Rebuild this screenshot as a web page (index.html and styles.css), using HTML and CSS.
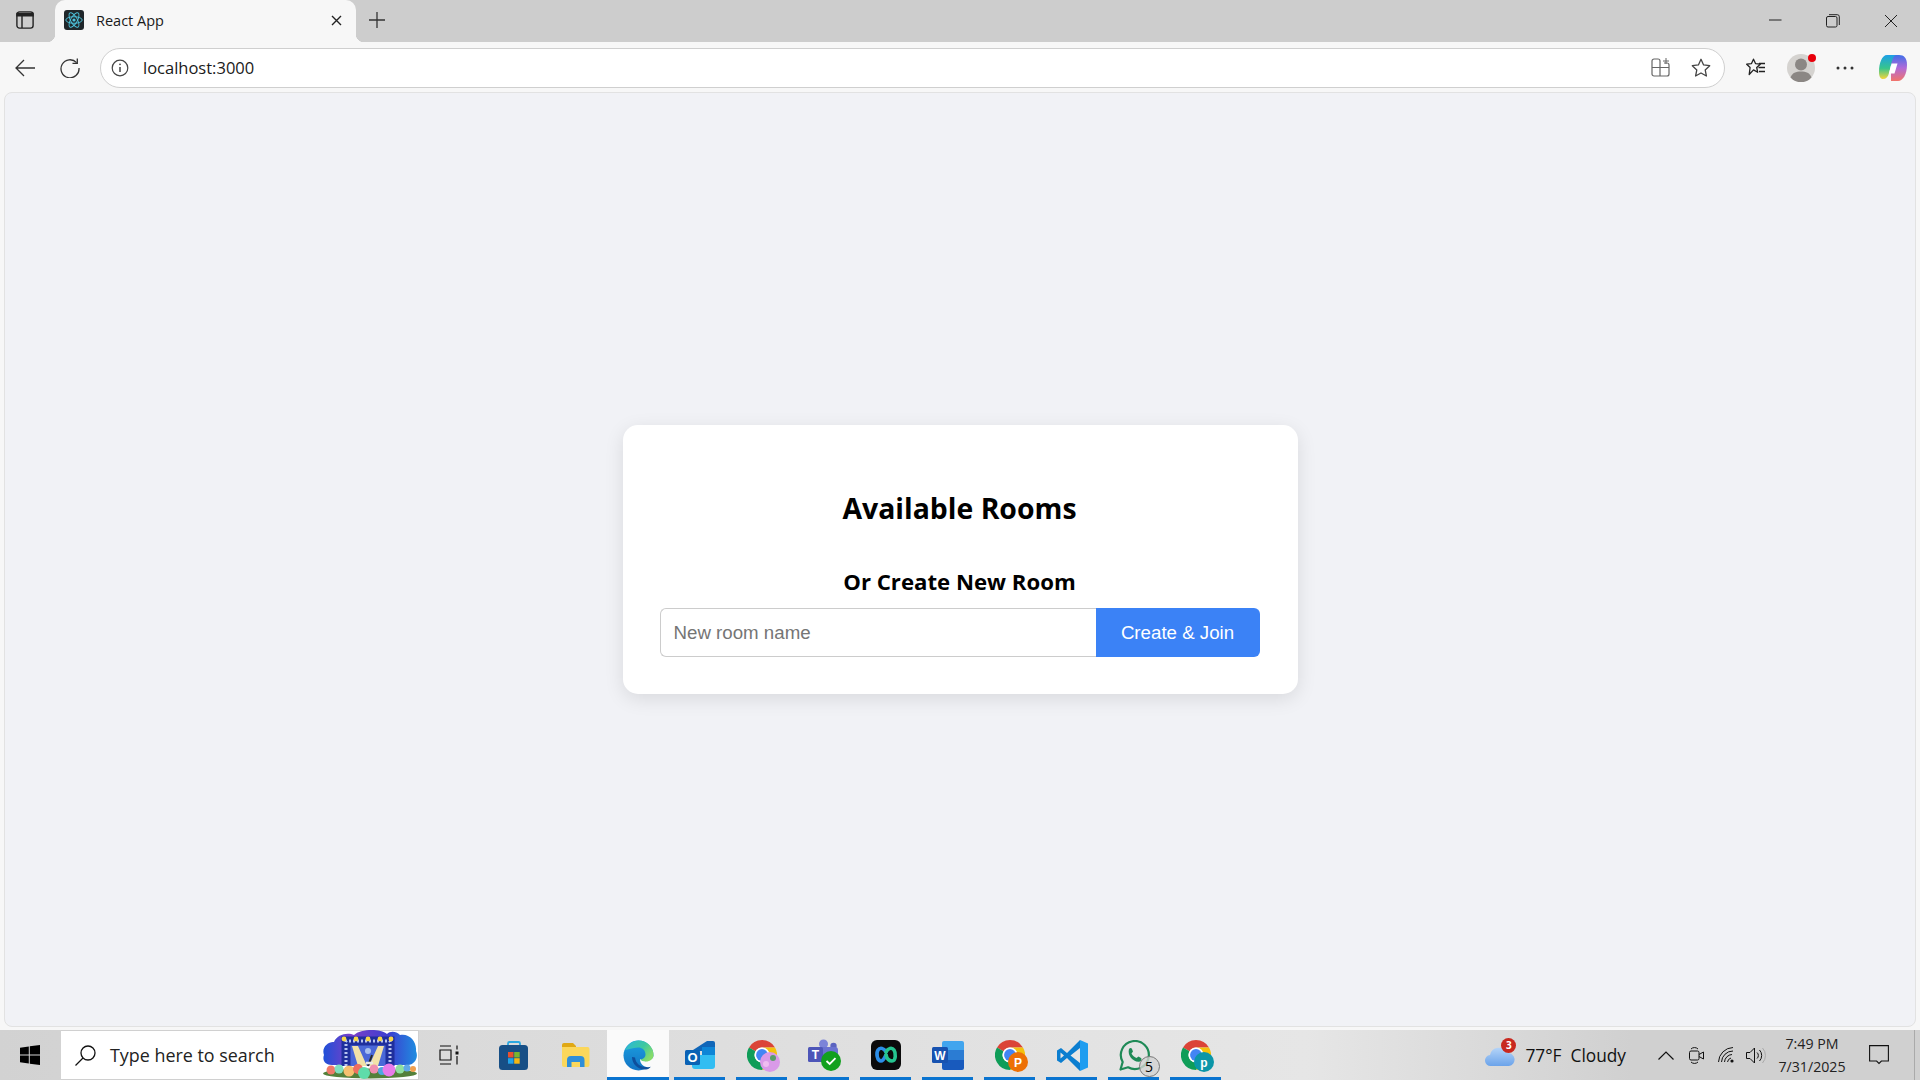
FILE: index.html
```html
<!DOCTYPE html>
<html lang="en">
<head>
    <meta charset="UTF-8">
    <title>React App</title>
    <link rel="stylesheet" href="styles.css">
</head>
<body>
    <!-- Shared icons -->
    <svg class="defs" width="0" height="0">
        <defs>
            <symbol id="chrome" viewBox="0 0 32 32">
                <path fill="#db4437" d="M16 0A16 16 0 0 1 29.86 8H16A8 8 0 0 0 9.07 12L2.14 8A16 16 0 0 1 16 0Z"/>
                <path fill="#f4c20d" d="M29.86 8A16 16 0 0 1 16 32L22.93 20A8 8 0 0 0 16 8Z"/>
                <path fill="#0f9d58" d="M2.14 8A16 16 0 0 0 16 32L22.93 20A8 8 0 0 1 9.07 12Z"/>
                <circle cx="16" cy="16" r="8" fill="#fff"/>
                <circle cx="16" cy="16" r="6.3" fill="#4285f4"/>
            </symbol>
            <linearGradient id="edgeA" x1="0" y1="0" x2="1" y2=".6">
                <stop offset="0" stop-color="#2bb6dc"/>
                <stop offset=".6" stop-color="#3cc8a0"/>
                <stop offset="1" stop-color="#86dc6a"/>
            </linearGradient>
            <linearGradient id="edgeB" x1="0" y1="0" x2="0" y2="1">
                <stop offset="0" stop-color="#1ca0e0"/>
                <stop offset="1" stop-color="#1273c4"/>
            </linearGradient>
            <linearGradient id="copA" x1="0" y1="0" x2="0" y2="1">
                <stop offset="0" stop-color="#1d9fe8"/>
                <stop offset=".55" stop-color="#37c58c"/>
                <stop offset="1" stop-color="#f5d53c"/>
            </linearGradient>
            <linearGradient id="copB" x1="0" y1="0" x2="0" y2="1">
                <stop offset="0" stop-color="#3f6fe8"/>
                <stop offset=".5" stop-color="#b16ad8"/>
                <stop offset="1" stop-color="#f2746a"/>
            </linearGradient>
            <linearGradient id="cloud" x1="0" y1="0" x2="0" y2="1">
                <stop offset="0" stop-color="#b4d4f8"/>
                <stop offset="1" stop-color="#6ba3ea"/>
            </linearGradient>
            <linearGradient id="blobs" x1="0" y1="0" x2="1" y2="0">
                <stop offset="0" stop-color="#1f50d8"/>
                <stop offset=".3" stop-color="#7a3fc8"/>
                <stop offset=".7" stop-color="#3b3fd0"/>
                <stop offset="1" stop-color="#1f8de0"/>
            </linearGradient>
        </defs>
    </svg>

    <div class="app">
        <!-- Browser tab strip -->
        <div class="tabbar">
            <div class="strip-btn">
                <svg width="18" height="18" viewBox="0 0 18 18" fill="none" stroke="#222" stroke-width="1.4">
                    <rect x=".9" y=".9" width="16.2" height="16.2" rx="2.6"/>
                    <path d="M1 2.5h16v2.2H1zM6 4.7V17" fill="#222"/>
                </svg>
            </div>
            <div class="tab">
                <svg class="tab-icon" width="20" height="20" viewBox="0 0 20 20" fill="none" stroke="#4fc6e0" stroke-width=".9">
                    <rect width="20" height="20" rx="3" fill="#20272b" stroke="none"/>
                    <ellipse cx="10" cy="10" rx="8.2" ry="3.3"/>
                    <ellipse cx="10" cy="10" rx="8.2" ry="3.3" transform="rotate(60 10 10)"/>
                    <ellipse cx="10" cy="10" rx="8.2" ry="3.3" transform="rotate(120 10 10)"/>
                    <circle cx="10" cy="10" r="1.6" fill="#4fc6e0" stroke="none"/>
                </svg>
                <span class="tab-title">React App</span>
                <svg class="tab-close" width="11" height="11" viewBox="0 0 11 11" stroke="#222" stroke-width="1.4">
                    <path d="M1 1l9 9M10 1l-9 9"/>
                </svg>
            </div>
            <div class="new-tab">
                <svg width="18" height="18" viewBox="0 0 18 18" stroke="#333" stroke-width="1.3">
                    <path d="M9 1v16M1 9h16"/>
                </svg>
            </div>
            <div class="window-controls">
                <div class="win-btn">
                    <svg width="14" height="14" viewBox="0 0 14 14" stroke="#222" stroke-width="1"><path d="M1 6h12.5"/></svg>
                </div>
                <div class="win-btn">
                    <svg width="14" height="14" viewBox="0 0 14 14" fill="none" stroke="#222" stroke-width="1">
                        <rect x=".5" y="2.5" width="10.5" height="10.5" rx="1.5"/>
                        <path d="M3 .7h8.3a2 2 0 0 1 2 2V11"/>
                    </svg>
                </div>
                <div class="win-btn">
                    <svg width="14" height="14" viewBox="0 0 14 14" stroke="#222" stroke-width="1"><path d="M1 1l12 12M13 1L1 13"/></svg>
                </div>
            </div>
        </div>

        <!-- Address bar row -->
        <div class="toolbar">
            <div class="tool-btn">
                <svg width="20" height="18" viewBox="0 0 20 18" fill="none" stroke="#333" stroke-width="1.3">
                    <path d="M20 9H1M9 1L1 9l8 8"/>
                </svg>
            </div>
            <div class="tool-btn">
                <svg width="20" height="20" viewBox="0 0 20 20" fill="none" stroke="#333" stroke-width="1.3">
                    <path d="M16.6 4.6A9 9 0 1 0 19 10"/>
                    <path d="M17.3 .5v4.8h-4.8"/>
                </svg>
            </div>
            <div class="urlbar">
                <svg class="info-icon" width="18" height="18" viewBox="0 0 18 18" fill="none" stroke="#444" stroke-width="1.2">
                    <circle cx="9" cy="9" r="7.8"/>
                    <path d="M9 8v5" stroke-width="1.5"/>
                    <circle cx="9" cy="5.3" r=".9" fill="#444" stroke="none"/>
                </svg>
                <span class="url-text">localhost:3000</span>
                <svg class="url-ext" width="19" height="19" viewBox="0 0 19 19" fill="none" stroke="#666" stroke-width="1.2">
                    <path d="M9 3v15M1 9.5h17M13 5h3a2 2 0 0 1 2 2v9a2 2 0 0 1-2 2H3a2 2 0 0 1-2-2V3a2 2 0 0 1 2-2h4a2 2 0 0 1 2 2"/>
                    <path d="M15 0v6M12 3h6" stroke-width="1"/>
                </svg>
                <svg class="url-star" width="20" height="20" viewBox="0 0 20 20" fill="none" stroke="#444" stroke-width="1.3" stroke-linejoin="round">
                    <path d="M10 1.3l2.6 5.6 6.1.8-4.5 4.2 1.2 6.1-5.4-3-5.4 3 1.2-6.1L1.3 7.7l6.1-.8z"/>
                </svg>
            </div>
            <div class="tool-btn">
                <svg width="20" height="19" viewBox="0 0 20 19" fill="none" stroke="#222" stroke-width="1.3" stroke-linejoin="round">
                    <path d="M7.5 1.2l2 4.4 4.8.6-3.6 3.3 1 4.8-4.2-2.4-4.3 4.6.9-7-3.4-3.3 4.8-.6z"/>
                    <path d="M13 5.5h6M12.5 9.5h6.5M13 13.5h6"/>
                </svg>
            </div>
            <div class="tool-btn">
                <div class="profile">
                    <svg width="28" height="28" viewBox="0 0 28 28">
                        <circle cx="14" cy="14" r="14" fill="#d5d3d0"/>
                        <circle cx="14" cy="10.5" r="6" fill="#8b8784"/>
                        <path d="M3.5 23.5C5 19 9 17.5 14 17.5s9 1.5 10.5 6A14 14 0 0 1 3.5 23.5Z" fill="#8b8784"/>
                    </svg>
                    <span class="profile-dot"></span>
                </div>
            </div>
            <div class="tool-btn more-btn">
                <svg width="18" height="4" viewBox="0 0 18 4" fill="#333">
                    <circle cx="2" cy="2" r="1.5"/><circle cx="9" cy="2" r="1.5"/><circle cx="16" cy="2" r="1.5"/>
                </svg>
            </div>
            <div class="tool-btn copilot-btn">
                <svg width="28" height="28" viewBox="0 0 28 28">
                    <path fill="url(#copB)" d="M12 1h8c5 0 8 3 8 10 0 9-4 16-9 16h-7z"/>
                    <path fill="url(#copA)" d="M8 1h9c-2 1-3 2.500-4 6l-3 12c-1 4-3 6-6 6-2.500 0-4-2.500-4-7C0 9 3 1 8 1Z"/>
                    <path fill="#fff" d="M12.500 9.500h6l-3 10h-5.500z"/>
                </svg>
            </div>
        </div>

        <!-- The page itself -->
        <main class="viewport">
            <div class="room-card">
                <h2 class="room-title">Available Rooms</h2>
                <h3 class="room-subtitle">Or Create New Room</h3>
                <div class="room-form">
                    <input class="room-input" type="text" placeholder="New room name">
                    <button class="room-button">Create &amp; Join</button>
                </div>
            </div>
        </main>

        <!-- Windows taskbar -->
        <div class="taskbar">
            <div class="start-btn">
                <svg width="20" height="20" viewBox="0 0 20 20" fill="#000">
                    <path d="M0 2.800l8.800-1.300v8H0zM9.800 1.300L20 0v9.500H9.800zM0 10.500h8.800v8L0 17.200zM9.800 10.500H20V20L9.800 18.700z"/>
                </svg>
            </div>
            <div class="search-box">
                <svg class="search-icon" width="21" height="21" viewBox="0 0 21 21" fill="none" stroke="#111" stroke-width="1.3">
                    <circle cx="13" cy="8" r="7"/>
                    <path d="M8 13l-7.500 7.500"/>
                </svg>
                <span class="search-text">Type here to search</span>
                <svg class="search-doodle" width="96" height="50" viewBox="0 0 96 50">
                    <path fill="url(#blobs)" d="M2 26c-3-8 5-14 10-13 3-8 14-10 20-7 6-6 26-7 33-1 3-3 9-3 13 1 9-2 17 6 16 16 3 7-2 14-8 14H10C3 36 0 31 2 26Z"/>
                    <rect x="28" y="15" width="36" height="22" fill="#4a68d8"/>
                    <path fill="none" stroke="#1f2f9c" stroke-width="9" d="M24 37V12h44v25"/>
                    <path fill="none" stroke="#b8c4f0" stroke-width="3" stroke-dasharray="2 2" d="M24 37V12h44v25"/>
                    <path fill="#f2e2a8" d="M30 17h6l9 20H36zM62 17h-6l-9 20h9z"/>
                    <circle cx="46" cy="22" r="3" fill="#a8c0f0"/>
                    <path stroke="#2a2a2a" stroke-width="2" d="M50 26l-4 11"/>
                    <path stroke="#e8e8e8" stroke-width="2.500" d="M44 34h7"/>
                    <g fill="#f7d84a">
                        <circle cx="22" cy="10" r="2.400"/><circle cx="34" cy="10" r="2.400"/><circle cx="46" cy="10" r="2.400"/><circle cx="58" cy="10" r="2.400"/><circle cx="69" cy="10" r="2.400"/>
                    </g>
                    <ellipse cx="48" cy="44.500" rx="47" ry="5" fill="#54803a"/>
                    <circle cx="9" cy="41" r="4.500" fill="#ef7a6a"/>
                    <circle cx="17" cy="40" r="4.500" fill="#7fe0c0"/>
                    <circle cx="27" cy="42" r="5.500" fill="#f6c06f"/>
                    <circle cx="36" cy="40" r="5" fill="#ef6f5f"/>
                    <circle cx="42" cy="44" r="6" fill="#5fdcaa"/>
                    <circle cx="52" cy="40" r="4.500" fill="#f08fb0"/>
                    <circle cx="60" cy="42" r="4" fill="#4ea8e0"/>
                    <circle cx="67" cy="41" r="6.500" fill="#e87bea"/>
                    <circle cx="78" cy="40" r="4.500" fill="#8fe0a0"/>
                    <circle cx="85" cy="39" r="3.500" fill="#5fa8e8"/>
                    <circle cx="91" cy="40" r="3" fill="#f0a050"/>
                </svg>
            </div>
            <div class="task-view">
                <svg width="20" height="20" viewBox="0 0 20 20" fill="none" stroke="#111" stroke-width="1.2">
                    <path d="M1 1h11M1 19h11M1 5h11v10H1z"/>
                    <path d="M18 .5v4M18 11v8.500"/>
                    <rect x="16.500" y="6.500" width="3" height="3" fill="#111" stroke="none"/>
                </svg>
            </div>

            <div class="task-apps">
                <div class="task-app">
                    <svg width="30" height="30" viewBox="0 0 30 30">
                        <path d="M9 7V3.500A1.500 1.500 0 0 1 10.500 2h9A1.500 1.500 0 0 1 21 3.500V7" fill="none" stroke="#2aa7e0" stroke-width="1.8"/>
                        <rect y="5" width="29" height="25" rx="3.5" fill="#174f86"/>
                        <rect x="9" y="12" width="5.500" height="5.500" fill="#e8512e"/>
                        <rect x="15.200" y="12" width="5.500" height="5.500" fill="#7ab52e"/>
                        <rect x="9" y="18.200" width="5.500" height="5.500" fill="#21a3e8"/>
                        <rect x="15.200" y="18.200" width="5.500" height="5.500" fill="#f5b712"/>
                    </svg>
                </div>
                <div class="task-app">
                    <svg width="28" height="24" viewBox="0 0 28 24">
                        <path fill="#e0a814" d="M0 2a2 2 0 0 1 2-2h9l3 3v5H0z"/>
                        <path fill="#fbd75b" d="M0 4h25.500a2 2 0 0 1 2 2v16a2 2 0 0 1-2 2H2a2 2 0 0 1-2-2z"/>
                        <path fill="#2f8fd8" d="M5 17a4 4 0 0 1 4-4h9.500a4 4 0 0 1 4 4v7H18v-5H9.500v5H5z"/>
                    </svg>
                </div>
                <div class="task-app is-active">
                    <svg width="31" height="31" viewBox="0 0 31 31">
                        <circle cx="15.500" cy="15.500" r="15" fill="url(#edgeB)"/>
                        <path fill="#0e4f9c" d="M9 17c0 7 6 13 14 12.500 2-.2 3.500-1 5-3-8 2-15-1-16-9z"/>
                        <path fill="#fafafa" d="M31 16c-3 5-9 7-14 3 0 5 4 9 10 8 2-1 4-6 4-11z"/>
                        <path fill="url(#edgeA)" d="M2 10C5 4 10 .5 15.500 .500 24 .5 30.500 7 30.500 15c0 4-3.500 6.500-7.500 6.500-3 0-5-1-5.500-2 2.500-.5 5-2 5-5C22.500 10 19 7.500 15 7.500 9.500 7.500 5 10 2 10Z"/>
                    </svg>
                </div>
                <div class="task-app is-open">
                    <svg width="30" height="28" viewBox="0 0 30 28">
                        <path fill="#1066b8" d="M8 9L22 0h6a2 2 0 0 1 2 2v8H8z"/>
                        <path fill="#32bdf2" d="M7 14h23v11a3 3 0 0 1-3 3H10a3 3 0 0 1-3-3z"/>
                        <path fill="#0e85d6" d="M17 6h13v8H17z"/>
                        <rect y="9" width="15" height="15" rx="1.5" fill="#0a62b5"/>
                        <text class="app-letter" x="7.5" y="21" font-size="13">O</text>
                    </svg>
                </div>
                <div class="task-app is-open">
                    <span class="app-stack">
                        <svg width="30" height="30"><use href="#chrome"/></svg>
                        <svg class="app-overlay" width="20" height="20" viewBox="0 0 20 20">
                            <circle cx="10" cy="10" r="10" fill="#d99ae8"/>
                            <circle cx="13" cy="6" r="3" fill="#5a9d6a"/>
                            <circle cx="6" cy="12" r="3" fill="#eebcf0"/>
                        </svg>
                    </span>
                </div>
                <div class="task-app is-open">
                    <svg width="33" height="32" viewBox="0 0 33 32">
                        <circle cx="15.5" cy="5" r="4.5" fill="#7b83d8"/>
                        <circle cx="25.5" cy="7" r="3.2" fill="#5b63c0"/>
                        <rect x="12" y="8" width="18" height="14" rx="3" fill="#6a72d0"/>
                        <rect y="8" width="15" height="15" rx="1.5" fill="#4d55b8"/>
                        <text class="app-letter" x="7.5" y="20" font-size="12">T</text>
                        <circle cx="23" cy="22" r="10" fill="#12a01e"/>
                        <path d="M18.5 22l3.2 3 5.800-5.800" fill="none" stroke="#fff" stroke-width="1.8"/>
                    </svg>
                </div>
                <div class="task-app is-open">
                    <svg width="30" height="30" viewBox="0 0 30 30" fill="none" stroke-width="3.6" stroke-linecap="round">
                        <rect width="30" height="30" rx="6" fill="#0b0b0b"/>
                        <path d="M15 12C13 8 9 7 7 10 5 13 6 21 10 21 12.500 21 14 17 15 15" stroke="#2c8ee8"/>
                        <path d="M15 15C16 19 18 21 21 21 25 21 25 13 23 10 21 7 17 8 15 12" stroke="#25c48f"/>
                    </svg>
                </div>
                <div class="task-app is-open">
                    <svg width="32" height="29" viewBox="0 0 32 29">
                        <path fill="#41a5ee" d="M10 2a2 2 0 0 1 2-2h18a2 2 0 0 1 2 2v7H10z"/>
                        <rect x="10" y="9" width="22" height="10" fill="#2b7cd3"/>
                        <path fill="#185abd" d="M10 19h22v8a2 2 0 0 1-2 2H12a2 2 0 0 1-2-2z"/>
                        <rect y="6" width="16" height="16" rx="1.5" fill="#1752b0"/>
                        <text class="app-letter" x="8" y="18.500" font-size="12">W</text>
                    </svg>
                </div>
                <div class="task-app is-open">
                    <span class="app-stack">
                        <svg width="30" height="30"><use href="#chrome"/></svg>
                        <svg class="app-overlay" width="20" height="20" viewBox="0 0 20 20">
                            <circle cx="10" cy="10" r="10" fill="#ed7005"/>
                            <text class="app-letter" x="10" y="14.5" font-size="12">P</text>
                        </svg>
                    </span>
                </div>
                <div class="task-app is-open">
                    <svg width="31" height="31" viewBox="0 0 31 31">
                        <path fill="#0b7ed0" d="M23 0L10 13 4 8 0 10.500v10L4 23l6-5 13 13z"/>
                        <path fill="#e6e6e6" d="M3.500 12.500v6l3.500-3zM23 8l-9.500 7.500L23 23z"/>
                        <path fill="#1f9df0" d="M23 0l8 3.500v24L23 31z"/>
                    </svg>
                </div>
                <div class="task-app is-open">
                    <span class="app-stack">
                        <svg width="31" height="31" viewBox="0 0 31 31">
                            <path d="M1.500 29.500l2.200-7.500a14 14 0 1 1 5.400 5.300z" fill="none" stroke="#1f8a57" stroke-width="2.2" stroke-linejoin="round"/>
                            <path d="M10 9c1-1.500 2.500-1.500 3 0l1 2.500-1.500 2c1 2 3 3.500 5 4.500l2-1.500 2.500 1.500c1 1 .5 2.500-1 3.500-6 1.500-13-5.500-11-12.500z" fill="#1f8a57"/>
                        </svg>
                        <span class="app-count">5</span>
                    </span>
                </div>
                <div class="task-app is-open">
                    <span class="app-stack">
                        <svg width="30" height="30"><use href="#chrome"/></svg>
                        <svg class="app-overlay" width="20" height="20" viewBox="0 0 20 20">
                            <circle cx="10" cy="10" r="10" fill="#0b96a8"/>
                            <text class="app-letter" x="10" y="14.5" font-size="12">p</text>
                        </svg>
                    </span>
                </div>
            </div>

            <div class="tray">
                <div class="weather">
                    <span class="weather-icon">
                        <svg width="30" height="23" viewBox="0 0 30 23">
                            <path fill="url(#cloud)" d="M6 22a5.500 5.500 0 0 1-1-11 9 9 0 0 1 17-2 6.500 6.500 0 0 1 2 13z"/>
                        </svg>
                        <span class="weather-badge">3</span>
                    </span>
                    <span class="weather-text">77°F&nbsp; Cloudy</span>
                </div>
                <div class="tray-icon">
                    <svg width="16" height="9" viewBox="0 0 16 9" fill="none" stroke="#111" stroke-width="1.2"><path d="M.5 8.500L8 1l7.500 7.500"/></svg>
                </div>
                <div class="tray-icon">
                    <svg width="15" height="19" viewBox="0 0 15 19" fill="none" stroke="#111" stroke-width="1">
                        <rect x=".5" y="5" width="9.5" height="9" rx="1.5"/>
                        <path d="M10 8.500l4.500-2.500v7L10 10.500"/>
                        <path d="M2 3a5 5 0 0 1 7 0M2 16a5 5 0 0 0 7 0"/>
                    </svg>
                </div>
                <div class="tray-icon">
                    <svg width="17" height="16" viewBox="0 0 17 16" fill="none" stroke="#111" stroke-width="1">
                        <path d="M.5 15A15 15 0 0 1 15 .5"/>
                        <path d="M3.500 15A11.500 11.500 0 0 1 15 4"/>
                        <path d="M6.500 15A8 8 0 0 1 14 7.500"/>
                        <path d="M9.500 15A5 5 0 0 1 13 11"/>
                        <circle cx="14" cy="14" r="1.6" fill="#111" stroke="none"/>
                    </svg>
                </div>
                <div class="tray-icon">
                    <svg width="20" height="17" viewBox="0 0 20 17" fill="none" stroke="#111" stroke-width="1">
                        <path d="M.5 5.500h3.500L8.500 1v15L4 11.500H.5z"/>
                        <path d="M11 5.500a4 4 0 0 1 0 6M13.500 3a8 8 0 0 1 0 11"/>
                        <path d="M16.500 1a11 11 0 0 1 0 15" stroke="#aaa"/>
                    </svg>
                </div>
                <div class="clock">
                    <div>7:49 PM</div>
                    <div>7/31/2025</div>
                </div>
                <div class="notify">
                    <svg width="20" height="20" viewBox="0 0 20 20" fill="none" stroke="#111" stroke-width="1.1">
                        <path d="M.6.6h18.800v15.400h-7L10 18.500 7.600 16H.6z"/>
                    </svg>
                </div>
                <div class="show-desktop"></div>
            </div>
        </div>
    </div>
</body>
</html>
```

FILE: styles.css
```css
/* Universal Styling */
* {
    box-sizing: border-box;
}

html, body {
    height: 100%;
    margin: 0;
    overflow: hidden;
}

body {
    font-family: "Open Sans", "Noto Sans", sans-serif;
    color: #111;
}

svg {
    display: block;
}

.defs {
    position: absolute;
}

.app {
    height: 100vh;
    display: flex;
    flex-direction: column;
    background-color: #f7f7f7;
}

/* Tab strip */
.tabbar {
    height: 42px;
    display: flex;
    align-items: stretch;
    background-color: #cdcdcd;
}

.strip-btn {
    width: 55px;
    padding: 0 5px 2px 0;
    display: flex;
    align-items: center;
    justify-content: center;
}

.tab {
    position: relative;
    width: 301px;
    padding: 0 14px 2px 9px;
    display: flex;
    align-items: center;
    background-color: #f7f7f7;
    border-radius: 10px 10px 0 0;
}

/* Flared corners at the foot of the tab */
.tab::before,
.tab::after {
    content: "";
    position: absolute;
    bottom: 0;
    width: 8px;
    height: 8px;
}

.tab::before {
    left: -8px;
    background: radial-gradient(circle at 0 0, transparent 8px, #f7f7f7 8.5px);
}

.tab::after {
    right: -8px;
    background: radial-gradient(circle at 100% 0, transparent 8px, #f7f7f7 8.5px);
}

.tab-icon {
    margin-right: 12px;
}

.tab-title {
    flex: 1;
    font-size: 14.5px;
    color: #1a1a1a;
}

.new-tab {
    width: 42px;
    padding-bottom: 2px;
    display: flex;
    align-items: center;
    justify-content: center;
}

.window-controls {
    margin-left: auto;
    display: flex;
}

.win-btn {
    width: 58px;
    display: flex;
    align-items: center;
    justify-content: center;
}

/* Address bar row */
.toolbar {
    height: 50px;
    padding: 1px 5px 0 2px;
    display: flex;
    align-items: center;
}

.tool-btn {
    width: 45px;
    display: flex;
    align-items: center;
    justify-content: center;
}

.more-btn {
    width: 43px;
}

.copilot-btn {
    margin-left: 4px;
}

.urlbar {
    flex: 1;
    height: 40px;
    margin: 0 8px;
    padding: 0 13px 0 10px;
    display: flex;
    align-items: center;
    background-color: #fff;
    border: 1px solid #cfcfcf;
    border-radius: 20px;
}

.info-icon {
    margin-right: 14px;
}

.url-text {
    flex: 1;
    font-size: 16.5px;
    color: #1a1a1a;
}

.url-ext {
    margin-right: 21px;
}

.profile {
    position: relative;
}

.profile-dot {
    position: absolute;
    top: 0;
    right: -1px;
    width: 8px;
    height: 8px;
    background-color: #e8000b;
    border-radius: 50%;
}

/* Page content */
.viewport {
    flex: 1;
    margin: 0 4px 3px;
    display: flex;
    align-items: center;
    justify-content: center;
    background-color: #f1f2f6;
    border: 1px solid #e2e2e2;
    border-radius: 8px;
}

.room-card {
    width: 675px;
    padding: 37px 38px 37px 37px;
    background-color: #fff;
    border-radius: 15px;
    box-shadow: 0 5px 19px rgba(0, 0, 0, 0.1);
    text-align: center;
    color: #000;
}

.room-title {
    margin: 26px 0 37px;
    font-size: 28.4px;
    line-height: 40px;
    font-weight: 700;
}

.room-subtitle {
    margin: 0 0 10px;
    font-size: 22.2px;
    line-height: 33px;
    font-weight: 700;
}

.room-form {
    display: flex;
    height: 49px;
}

.room-input {
    flex: 1;
    min-width: 0;
    padding: 0 13px;
    font-family: "Liberation Sans", sans-serif;
    font-size: 18.7px;
    background-color: #fff;
    border: 1px solid #ccc;
    border-right: none;
    border-radius: 6px 0 0 6px;
    outline: none;
}

.room-input::placeholder {
    color: #757575;
}

.room-button {
    width: 164px;
    font-family: "Liberation Sans", sans-serif;
    font-size: 18.7px;
    color: #fff;
    background-color: #3b82f6;
    border: none;
    border-radius: 0 6px 6px 0;
}

/* Taskbar */
.taskbar {
    height: 50px;
    display: flex;
    align-items: stretch;
    background: linear-gradient(90deg, #d2d2d2 0%, #dcdcdc 30%, #e6e6e6 68%, #d0d0d0 85%, #d0d0d0 100%);
}

.start-btn {
    width: 61px;
    padding-right: 1px;
    display: flex;
    align-items: center;
    justify-content: center;
}

.search-box {
    position: relative;
    width: 358px;
    padding-left: 14px;
    display: flex;
    align-items: center;
    background-color: #fff;
    border: 1px solid #d0d0d0;
    border-left: none;
}

.search-icon {
    margin-right: 14px;
}

.search-text {
    font-size: 17.9px;
    color: #222;
}

.search-doodle {
    position: absolute;
    right: 0;
    bottom: 0;
}

.task-view {
    width: 64px;
    padding-right: 4px;
    display: flex;
    align-items: center;
    justify-content: center;
}

.task-apps {
    display: flex;
}

.task-app {
    position: relative;
    width: 62px;
    display: flex;
    align-items: center;
    justify-content: center;
}

.task-app.is-active {
    background-color: #fafafa;
}

.task-app.is-open::after,
.task-app.is-active::after {
    content: "";
    position: absolute;
    bottom: 0;
    height: 3px;
    background-color: #0a74d0;
}

.task-app.is-open::after {
    left: 5px;
    right: 6px;
}

.task-app.is-active::after {
    left: 0;
    right: 0;
}

.app-stack {
    position: relative;
    display: block;
}

.app-overlay {
    position: absolute;
    right: -3px;
    bottom: -2px;
}

.app-letter {
    font-family: "Liberation Sans", sans-serif;
    font-weight: 700;
    fill: #fff;
    text-anchor: middle;
}

.app-count {
    position: absolute;
    right: -10px;
    bottom: -6px;
    width: 21px;
    height: 21px;
    font-size: 14px;
    line-height: 19px;
    text-align: center;
    color: #000;
    background-color: rgba(210, 210, 210, 0.8);
    border: 1px solid #777;
    border-radius: 50%;
}

/* System tray */
.tray {
    margin-left: auto;
    display: flex;
    align-items: center;
}

.weather {
    margin-right: 25px;
    display: flex;
    align-items: center;
}

.weather-icon {
    position: relative;
    margin-right: 10px;
}

.weather-badge {
    position: absolute;
    top: -6px;
    right: -1px;
    width: 15px;
    height: 15px;
    font-size: 10px;
    font-weight: 700;
    line-height: 15px;
    text-align: center;
    color: #fff;
    background-color: #c8281f;
    border-radius: 50%;
}

.weather-text {
    font-size: 17.3px;
    color: #111;
}

.tray-icon {
    width: 30px;
    display: flex;
    align-items: center;
    justify-content: center;
}

.clock {
    width: 82px;
    font-size: 14.2px;
    line-height: 23px;
    text-align: center;
    color: #222;
}

.notify {
    width: 52px;
    display: flex;
    justify-content: center;
}

.show-desktop {
    width: 15px;
    height: 50px;
    border-right: 5px solid transparent;
    box-shadow: inset -6px 0 0 -5px #aaa;
}
```
